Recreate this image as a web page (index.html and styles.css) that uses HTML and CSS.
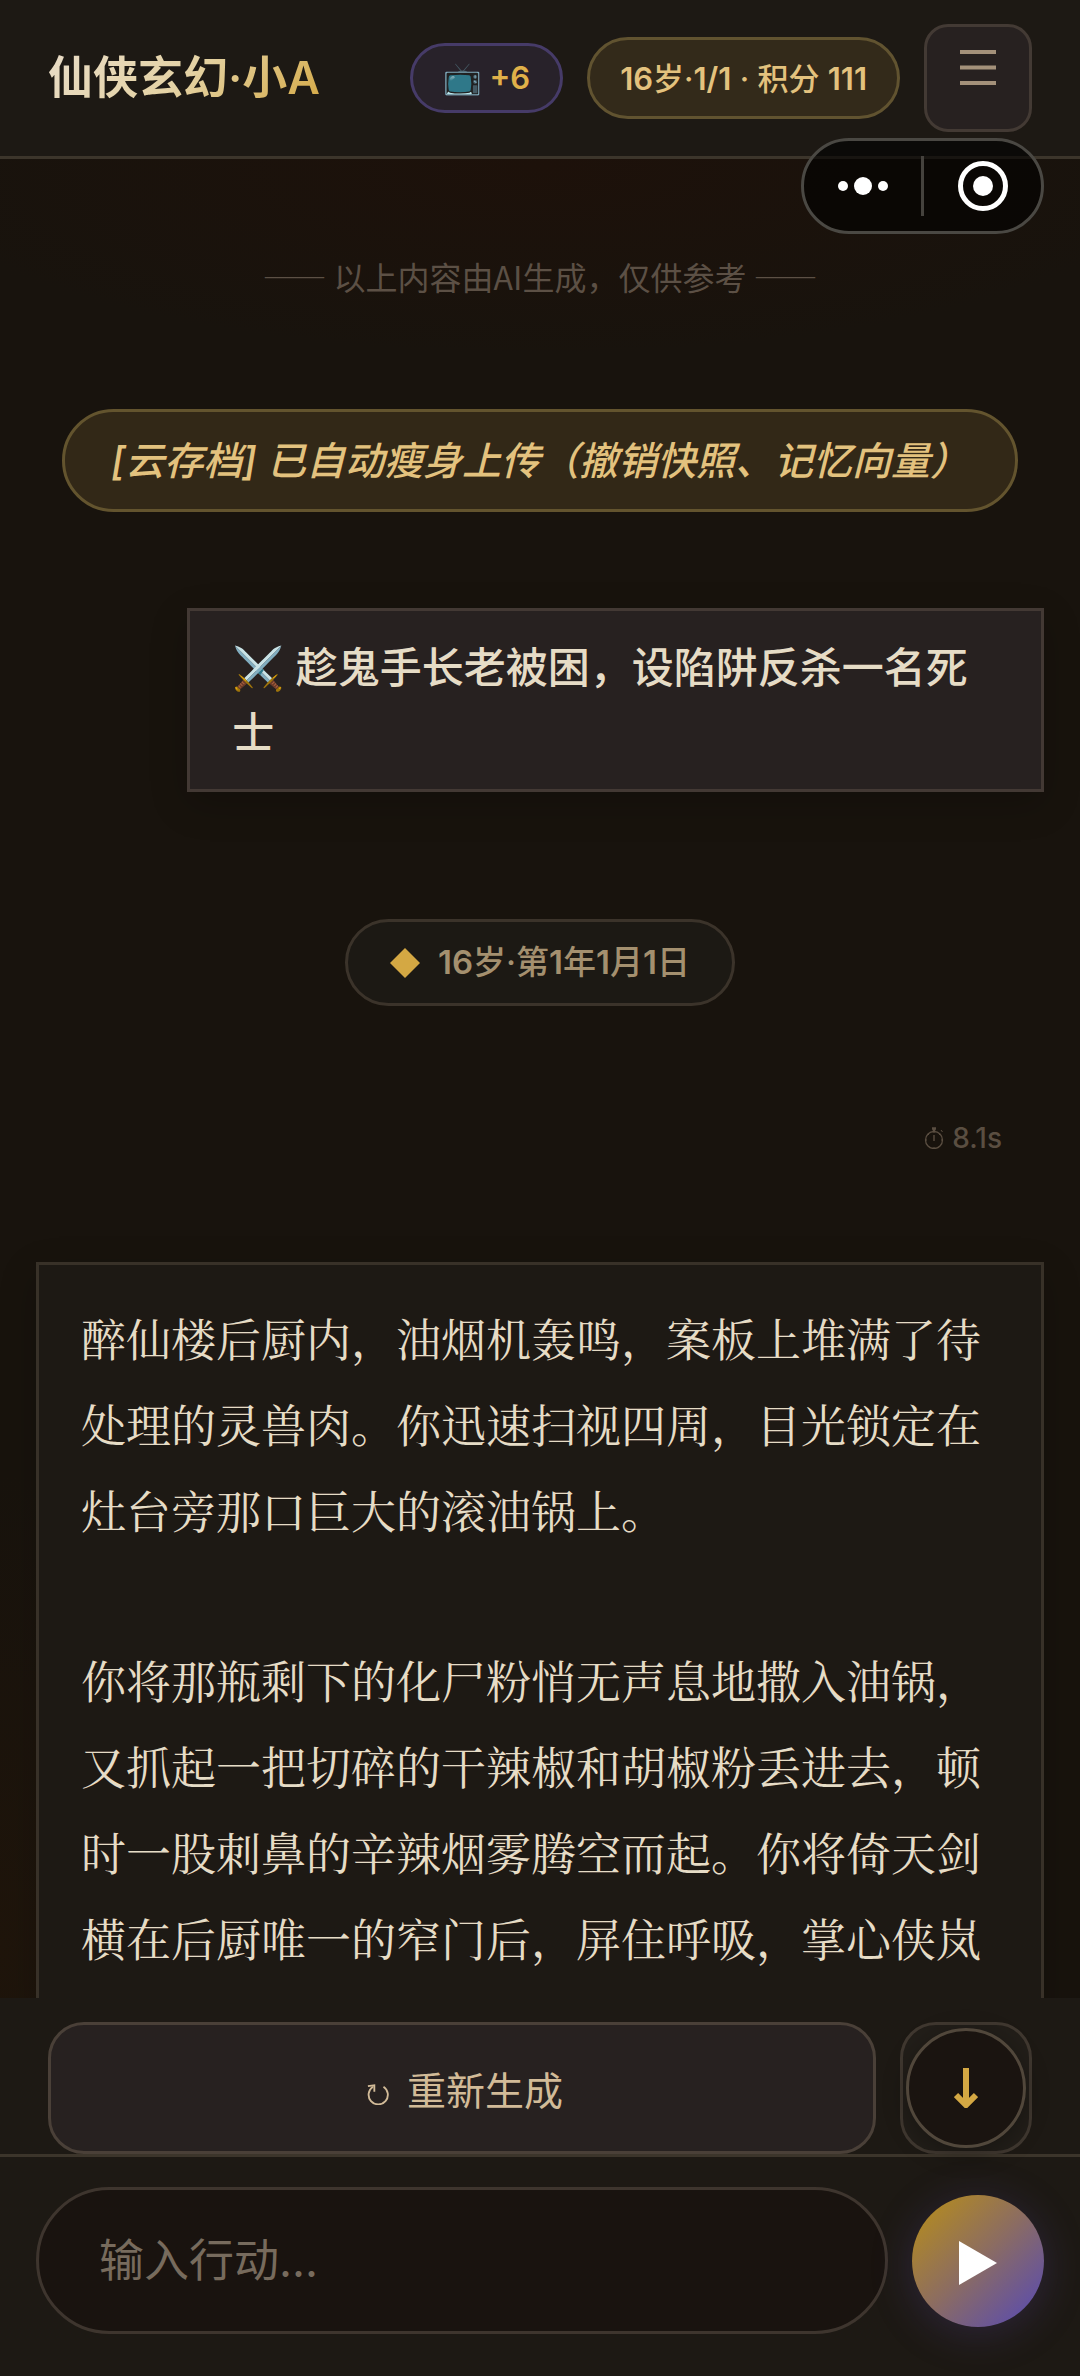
FILE: index.html
```html
<!DOCTYPE html>
<html lang="zh-CN">
<head>
<meta charset="utf-8">
<meta name="viewport" content="width=device-width, initial-scale=1">
<title>仙侠玄幻·小A</title>
<link rel="stylesheet" href="styles.css">
</head>
<body>
<header class="topbar">
  <h1 class="title">仙侠玄幻·小A</h1>
  <button class="reward" type="button">📺 +6</button>
  <div class="status"><span><b>16</b>岁·<b>1/1</b> · 积分 <b>111</b></span></div>
  <button class="menu" type="button" aria-label="菜单">
    <svg class="menu-icon" viewBox="0 0 36 36" aria-hidden="true"><path d="M0 2h36M0 17.500h36M0 33h36" stroke="currentColor" stroke-width="4"/></svg>
  </button>
</header>

<div class="capsule">
  <button type="button" class="capsule-btn" aria-label="更多">
    <svg class="dots" viewBox="0 0 52 20" aria-hidden="true"><g fill="#fff"><circle cx="6" cy="10" r="5"/><circle cx="26" cy="10" r="9"/><circle cx="46" cy="10" r="5"/></g></svg>
  </button>
  <button type="button" class="capsule-btn" aria-label="关闭">
    <svg class="ring" viewBox="0 0 50 50" aria-hidden="true"><circle cx="25" cy="25" r="22.500" fill="none" stroke="#fff" stroke-width="5"/><circle cx="25" cy="25" r="10" fill="#fff"/></svg>
  </button>
</div>

<main class="chat">
  <p class="notice">—— 以上内容由AI生成，仅供参考 ——</p>
  <p class="system">[云存档] 已自动瘦身上传（撤销快照、记忆向量）</p>
  <p class="user">⚔️ 趁鬼手长老被困，设陷阱反杀一名死士</p>
  <div class="date">
    <svg class="diamond" viewBox="0 0 30 30" aria-hidden="true"><path d="M15 0 30 15 15 30 0 15Z" fill="#d4a843"/></svg>
    <span><b>16</b>岁·第<b>1</b>年<b>1</b>月<b>1</b>日</span>
  </div>
  <div class="timer">
    <svg class="watch" viewBox="0 0 20 22" aria-hidden="true"><g fill="none" stroke="currentColor"><circle cx="10" cy="13" r="8.500" stroke-width="1.300"/><path d="M10 8v6" stroke-width="1.400"/><path d="M10 5v1M10 20v1M2 13h1M17 13h1M4 7l1 1M16 7l-1 1" stroke-width="1"/><path d="M10 4V1M8 1.500h4" stroke-width="2.500"/><path d="M17 3l1.500 2" stroke-width="1"/></g></svg>
    <span>8.1s</span>
  </div>
  <article class="story">
    <p>醉仙楼后厨内，油烟机轰鸣，案板上堆满了待处理的灵兽肉。你迅速扫视四周，目光锁定在灶台旁那口巨大的滚油锅上。</p>
    <p>你将那瓶剩下的化尸粉悄无声息地撒入油锅，又抓起一把切碎的干辣椒和胡椒粉丢进去，顿时一股刺鼻的辛辣烟雾腾空而起。你将倚天剑横在后厨唯一的窄门后，屏住呼吸，掌心侠岚</p>
  </article>
</main>

<section class="actions">
  <button class="regen" type="button">
    <svg class="redo" viewBox="0 0 24 24" aria-hidden="true"><path d="M18 4A10.500 10.500 0 1 1 6.500 4" fill="none" stroke="currentColor" stroke-width="2"/><path d="M1 3.500 8 2.500 8 9.500" fill="none" stroke="currentColor" stroke-width="2"/></svg>
    <span>重新生成</span>
  </button>
  <div class="jump">
    <button class="extra" type="button" aria-label="更多操作"></button>
    <button class="down" type="button" aria-label="滚动到底部">
      <svg class="down-icon" viewBox="0 0 24 40" aria-hidden="true"><path d="M12 0v36M2 27l10 10 10-10" fill="none" stroke="currentColor" stroke-width="6"/></svg>
    </button>
  </div>
</section>

<form class="composer">
  <input class="entry" type="text" placeholder="输入行动..." aria-label="输入行动">
  <button class="send" type="button" aria-label="发送">
    <svg class="play" viewBox="0 0 38 44" aria-hidden="true"><path d="M0 0 38 22 0 44Z" fill="#fff"/></svg>
  </button>
</form>
</body>
</html>
```
FILE: styles.css
```css
:root {
  --line: #3c352b;
  --edge: #4a4038;
  --panel: #1d1914;
  --raised: #272120;
  --text: #e6dcc6;
  --gold: #d4a843;
}

* {
  box-sizing: border-box;
}

body {
  margin: 0;
  height: 100vh;
  display: flex;
  flex-direction: column;
  overflow: hidden;
  color: var(--text);
  font-family: Inter, "Noto Sans CJK SC", "Noto Color Emoji", sans-serif;
  background:
    radial-gradient(ellipse 60% 8% at 50% 7%, #1d110a, transparent),
    radial-gradient(ellipse 20% 20% at 0 82%, #1f150b, transparent),
    #18130d;
}

h1,
p {
  margin: 0;
}

b {
  font-weight: 600;
}

button {
  margin: 0;
  padding: 0;
  border: 0;
  color: inherit;
  font: inherit;
  background: none;
}

svg {
  display: block;
}

.topbar {
  flex: none;
  display: flex;
  align-items: center;
  gap: 24px;
  padding: 24px 48px;
  border-bottom: 3px solid var(--line);
  background: var(--panel);
}

.title {
  margin-right: auto;
  font-size: 45px;
  line-height: 60px;
  font-weight: 600;
  white-space: nowrap;
  color: transparent;
  background: linear-gradient(135deg, #e8dcc8, #e4d2a4 50%, var(--gold));
  background-clip: text;
  -webkit-background-clip: text;
}

.reward,
.status {
  display: flex;
  align-items: center;
  white-space: nowrap;
  border: 3px solid;
  border-radius: 42px;
  font-size: 31px;
}

.reward {
  height: 70px;
  padding: 0 30px;
  border-color: #463b68;
  color: #e0b149;
  background: #28222a;
  font-weight: 600;
}

.status {
  height: 82px;
  padding: 0 30px 4px;
  border-color: #615330;
  color: #e3c27e;
  background: #332a1a;
  font-weight: 500;
}

.menu {
  width: 108px;
  height: 108px;
  display: flex;
  justify-content: center;
  padding-top: 23px;
  border: 3px solid #433a34;
  border-radius: 24px;
  color: #a4917a;
  background: var(--raised);
}

.menu-icon {
  width: 36px;
  height: 36px;
}

.capsule {
  position: absolute;
  top: 138px;
  right: 36px;
  width: 243px;
  height: 96px;
  display: flex;
  align-items: center;
  border: 3px solid #4a4843;
  border-radius: 48px;
  background: rgba(0, 0, 0, 0.6);
}

.capsule-btn {
  flex: 1;
  height: 60px;
  display: flex;
  align-items: center;
  justify-content: center;
}

.capsule-btn + .capsule-btn {
  border-left: 3px solid #45423d;
}

.dots {
  width: 52px;
  height: 20px;
}

.ring {
  width: 50px;
  height: 50px;
}

.chat {
  flex: 1;
  min-height: 0;
  overflow: hidden;
  display: flex;
  flex-direction: column;
  align-items: center;
  padding: 93px 36px 0;
}

.chat > * {
  flex: none;
}

.notice {
  margin-bottom: 109px;
  color: #5c5045;
  font-family: "Noto Sans CJK SC", sans-serif;
  font-size: 32px;
  line-height: 48px;
}

.system {
  margin-bottom: 96px;
  padding: 18px 46px;
  border: 3px solid #63542e;
  border-radius: 52px;
  color: #e3c27e;
  background: #322817;
  font-size: 39px;
  line-height: 61px;
  font-style: italic;
  font-weight: 500;
}

.user {
  align-self: flex-end;
  width: 85%;
  margin-bottom: 127px;
  padding: 24px 42px;
  border: 3px solid #433934;
  background: var(--raised);
  box-shadow: 0 12px 36px rgba(0, 0, 0, 0.2);
  font-size: 42px;
  line-height: 65px;
  font-weight: 500;
}

.date {
  display: flex;
  align-items: center;
  gap: 18px;
  margin-bottom: 108px;
  padding: 16px 42px;
  border: 3px solid #3b332a;
  border-radius: 44px;
  color: #a4906f;
  background: #1c1914;
  font-size: 33px;
  line-height: 49px;
  font-weight: 500;
}

.diamond {
  width: 30px;
  height: 30px;
}

.timer {
  align-self: flex-end;
  display: flex;
  align-items: center;
  gap: 8px;
  margin: 0 42px 100px 0;
  color: #5a4e41;
  font-size: 28px;
  line-height: 48px;
  font-weight: 500;
}

.watch {
  width: 20px;
  height: 22px;
}

.story {
  width: 100%;
  display: flex;
  flex-direction: column;
  gap: 84px;
  padding: 30px 42px;
  border: 3px solid #383128;
  background: var(--panel);
  box-shadow: 0 12px 36px rgba(0, 0, 0, 0.2);
  font-family: "Noto Serif CJK SC", "Noto Sans CJK SC", serif;
  font-size: 45px;
  line-height: 86px;
  font-weight: 400;
}

.actions {
  flex: none;
  display: flex;
  gap: 24px;
  padding: 24px 48px 0;
  background: var(--panel);
}

.regen {
  flex: 1;
  height: 132px;
  display: flex;
  align-items: center;
  justify-content: center;
  gap: 18px;
  padding-left: 6px;
  border: 3px solid var(--edge);
  border-radius: 36px;
  color: #d2bb98;
  background: var(--raised);
  font-size: 39px;
}

.redo {
  width: 22px;
  height: 22px;
  margin-top: 12px;
}

.jump {
  position: relative;
  width: 132px;
  height: 132px;
}

.extra {
  width: 100%;
  height: 100%;
  border: 3px solid #403830;
  border-radius: 36px;
  background: #221e19;
}

.down {
  position: absolute;
  inset: 6px;
  display: flex;
  align-items: center;
  justify-content: center;
  border: 3px solid #51473b;
  border-radius: 50%;
  color: var(--gold);
  background: #1a1410;
  box-shadow: 0 6px 24px rgba(0, 0, 0, 0.3);
}

.down-icon {
  width: 24px;
  height: 40px;
}

.composer {
  flex: none;
  display: flex;
  align-items: center;
  gap: 24px;
  padding: 30px 36px 42px;
  border-top: 3px solid var(--line);
  background: var(--panel);
}

.entry {
  flex: 1;
  min-width: 0;
  height: 147px;
  padding: 0 60px;
  border: 3px solid #3e352e;
  border-radius: 74px;
  outline: 0;
  color: var(--text);
  background: #19130f;
  font: inherit;
  font-size: 45px;
}

.entry::placeholder {
  color: #776b5d;
  opacity: 1;
}

.send {
  width: 132px;
  height: 132px;
  display: flex;
  align-items: center;
  justify-content: center;
  padding-top: 4px;
  border-radius: 50%;
  background: linear-gradient(135deg, #ac852c 15%, #8b6c62 50%, #6150a4 88%);
  box-shadow: 0 6px 42px rgba(91, 73, 160, 0.28);
}

.play {
  width: 38px;
  height: 44px;
}
```
